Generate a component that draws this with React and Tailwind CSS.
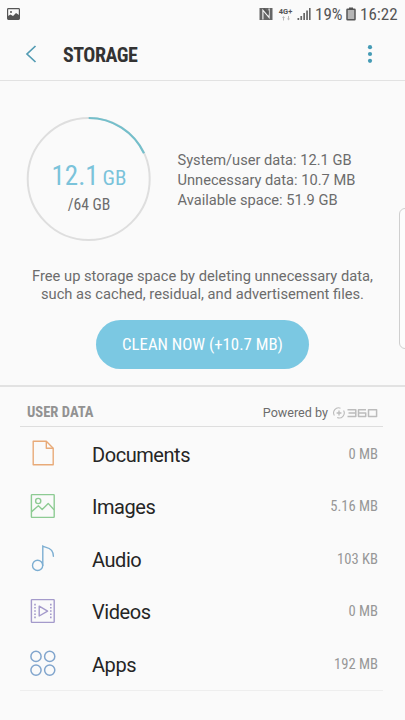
import React from 'react';

const DocumentIcon = () => (
  <svg width="26" height="28" viewBox="0 0 26 28" fill="none" stroke="#e8aa78" strokeWidth="1.4" strokeLinejoin="round">
    <path d="M3.2 2.2H16.3L23.2 9.2V25.8H3.2Z" />
    <path d="M16.3 2.2V9.2H23.2" />
  </svg>
);

const ImageIcon = () => (
  <svg width="26" height="26" viewBox="0 0 26 26" fill="none" stroke="#8dcb93" strokeWidth="1.4" strokeLinejoin="round">
    <rect x="1.4" y="1.6" width="22.8" height="22.8" rx="0.6" />
    <circle cx="8.2" cy="8" r="2.6" />
    <path d="M1.6 18.6L8.4 12.8L12.2 16.4L18.2 10.4L24 16.8" />
  </svg>
);

const AudioIcon = () => (
  <svg width="26" height="28" viewBox="0 0 26 28" fill="none" stroke="#7caed2" strokeWidth="1.4" strokeLinecap="round">
    <circle cx="7.6" cy="21.4" r="5.1" />
    <path d="M12.8 21.4V2.2C14.8 3.4 19 3 21.6 6.4C23 8.4 23.6 10.2 23.4 12.2" />
  </svg>
);

const VideoIcon = () => (
  <svg width="26" height="26" viewBox="0 0 26 26" fill="none" stroke="#a49acb" strokeWidth="1.4" strokeLinejoin="round">
    <rect x="1.4" y="1.6" width="22.8" height="22.8" rx="0.6" />
    <path d="M9.2 8.2V18L17.6 13.1Z" />
    <path d="M5 5.8V21.4M20.8 5.8V21.4" strokeWidth="1.6" strokeDasharray="1.6 1.6" />
  </svg>
);

const AppsIcon = () => (
  <svg width="28" height="28" viewBox="0 0 28 28" fill="none" stroke="#81a5cd" strokeWidth="1.5">
    <circle cx="7" cy="7.4" r="5.1" />
    <circle cx="20.7" cy="7.4" r="5.1" />
    <circle cx="7" cy="21.1" r="5.1" />
    <circle cx="20.7" cy="21.1" r="5.1" />
  </svg>
);

const rows = [
  { name: 'Documents', size: '0 MB', Icon: DocumentIcon },
  { name: 'Images', size: '5.16 MB', Icon: ImageIcon },
  { name: 'Audio', size: '103 KB', Icon: AudioIcon },
  { name: 'Videos', size: '0 MB', Icon: VideoIcon },
  { name: 'Apps', size: '192 MB', Icon: AppsIcon },
];

function StatusBar() {
  return (
    <div className="flex h-7 items-center pl-[7px] pr-[8px] text-[#555]">
      <svg width="13" height="12" viewBox="0 0 13 12">
        <rect x="0.6" y="0.6" width="11.8" height="10.8" rx="0.8" fill="none" stroke="#555" strokeWidth="1.2" />
        <path d="M1 8L3.5 6.5L6 8L9 5L12 7V11H1Z" fill="#555" />
        <circle cx="4" cy="4" r="1" fill="#555" />
      </svg>
      <svg className="ml-auto" width="14" height="14" viewBox="0 0 14 14">
        <path d="M0.5 1H13.5V13H0.5Z" fill="#666" />
        <path d="M3.9 12.5V3.2L10.1 10.6V1.5" fill="none" stroke="#fafafa" strokeWidth="1.1" />
        <path d="M4.8 1.4L9.2 6.6V3.4" fill="none" stroke="#555" strokeWidth="1.2" />
      </svg>
      <div className="ml-[5px] flex w-[15px] flex-col items-center">
        <span className="text-[7.5px] font-bold leading-[8px]">4G+</span>
        <svg width="8" height="5" viewBox="0 0 8 5" fill="#bbb">
          <path d="M1.5 0L3 2H2V4.5H1V2H0ZM6.5 4.5L5 2.5H6V0H7V2.5H8Z" />
        </svg>
      </div>
      <svg className="ml-[4px]" width="14" height="14" viewBox="0 0 14 14" fill="#666">
        <path d="M0.5 11H2.2V13H0.5ZM3.4 9H5.1V13H3.4ZM6.3 6H8V13H6.3ZM9.2 3.4H10.9V13H9.2ZM12 1H13.6V13H12Z" />
      </svg>
      <span className="ml-[4px] w-[28px] whitespace-nowrap text-[17px] leading-7 [font-stretch:75%]">19%</span>
      <svg className="ml-[3px]" width="10" height="14" viewBox="0 0 10 14">
        <path d="M3 0.5H7V2H3Z" fill="#555" />
        <rect x="1" y="2.2" width="8" height="10.6" rx="0.6" fill="#b5b5b5" stroke="#555" strokeWidth="1.5" />
      </svg>
      <span className="ml-[4px] w-[37px] whitespace-nowrap text-[17px] leading-7 [font-stretch:75%]">16:22</span>
    </div>
  );
}

export default function App() {
  return (
    <div className="relative h-[720px] w-[405px] overflow-hidden bg-[#fafafa] font-['Roboto',sans-serif] text-[#6c6c6c]">
      <StatusBar />
      <header className="flex h-[53px] items-center border-b border-[#e2e2e2] pl-[25px] pr-[32px]">
        <svg width="12" height="18" viewBox="0 0 12 18" fill="none" stroke="#529bb3" strokeWidth="1.7">
          <path d="M10.5 1L2 9L10.5 17" />
        </svg>
        <h1 className="ml-[26px] whitespace-nowrap pt-[2px] text-[20px] font-bold leading-6 tracking-[-0.5px] text-[#333] [font-stretch:75%]">STORAGE</h1>
        <svg className="ml-auto" width="6" height="18" viewBox="0 0 6 18" fill="#459bb5">
          <circle cx="3" cy="2.2" r="2.1" />
          <circle cx="3" cy="9" r="2.1" />
          <circle cx="3" cy="15.8" r="2.1" />
        </svg>
      </header>

      <section className="flex h-[306px] flex-col items-center border-b-2 border-[#e2e2e2]">
        <div className="flex w-full pl-[26px] pt-[35px]">
          <div className="grid size-[126px] shrink-0">
            <svg className="col-start-1 row-start-1" width="126" height="126" viewBox="0 0 126 126" fill="none">
              <circle cx="62.7" cy="63" r="61" stroke="#dedede" strokeWidth="2" />
              <path d="M62.7 2A61 61 0 0 1 118 37.3" stroke="#74bfcb" strokeWidth="2.2" />
            </svg>
            <div className="col-start-1 row-start-1 flex flex-col items-center pt-[44px]">
              <div className="flex items-baseline whitespace-nowrap text-[#7bc3da] [font-stretch:75%]">
                <span className="text-[27px] leading-8">12.1</span>
                <span className="ml-[4px] text-[21px] leading-8">GB</span>
              </div>
              <span className="text-[15.7px] leading-[21px] [font-stretch:75%]">/64 GB</span>
            </div>
          </div>
          <div className="ml-[25.5px] whitespace-nowrap pt-[34px] text-[14.65px] leading-5">
            <p>System/user data: 12.1 GB</p>
            <p>Unnecessary data: 10.7 MB</p>
            <p>Available space: 51.9 GB</p>
          </div>
        </div>
        <p className="mt-[26px] whitespace-nowrap text-center text-[14.7px] leading-[17.5px]">
          Free up storage space by deleting unnecessary data,
          <br />
          such as cached, residual, and advertisement files.
        </p>
        <button className="mt-[16.5px] flex h-[49px] w-[213px] items-center justify-center whitespace-nowrap rounded-full bg-[#7bc8e2] pt-[2px] text-[16.8px] text-white [font-stretch:75%]">
          CLEAN NOW (+10.7 MB)
        </button>
      </section>

      <section className="pl-[20px] pr-[22px]">
        <div className="flex h-[40px] items-center border-b border-[#dedede] pl-[7px] pr-[5px] pt-[13px]">
          <h2 className="whitespace-nowrap text-[14.6px] font-bold text-[#929292] [font-stretch:75%]">USER DATA</h2>
          <span className="ml-auto whitespace-nowrap text-[12.6px]">Powered by</span>
          <svg className="ml-[5px]" width="45" height="12" viewBox="0 0 45 12" fill="none" stroke="#bcbcbc">
            <path d="M1.4 8.5A5 5 0 0 1 7.5 1.2M10.6 3.5A5 5 0 0 1 4.2 10.5" strokeWidth="1.1" />
            <path d="M6 3.6V8.4M3.6 6H8.4" strokeWidth="1.3" />
            <path d="M14.5 2.7H22.8V9.5H14.5M15.5 6.1H22.8M33 2.7H25.5V9.5H32.7V6.1H25.5M35.5 2.7H43.6V9.5H35.5Z" strokeWidth="1.5" strokeLinejoin="round" />
          </svg>
        </div>
        <ul className="border-b border-[#eeeeee]">
          {rows.map(({ name, size, Icon }) => (
            <li key={name} className="flex h-[52.5px] items-center pl-[9px] pr-[5px]">
              <span className="flex w-[28px] justify-center">
                <Icon />
              </span>
              <span className="ml-[35px] pt-[3px] text-[20px] tracking-[-0.45px] text-[#252525]">{name}</span>
              <span className="ml-auto whitespace-nowrap pt-[3px] text-[14.6px] text-[#979797] [font-stretch:75%]">{size}</span>
            </li>
          ))}
        </ul>
      </section>

      <div className="absolute left-[399px] top-[208px] h-[141px] w-5 rounded-l-[6px] border border-[#cfcfcf] bg-[#fcfcfc]" />
    </div>
  );
}
